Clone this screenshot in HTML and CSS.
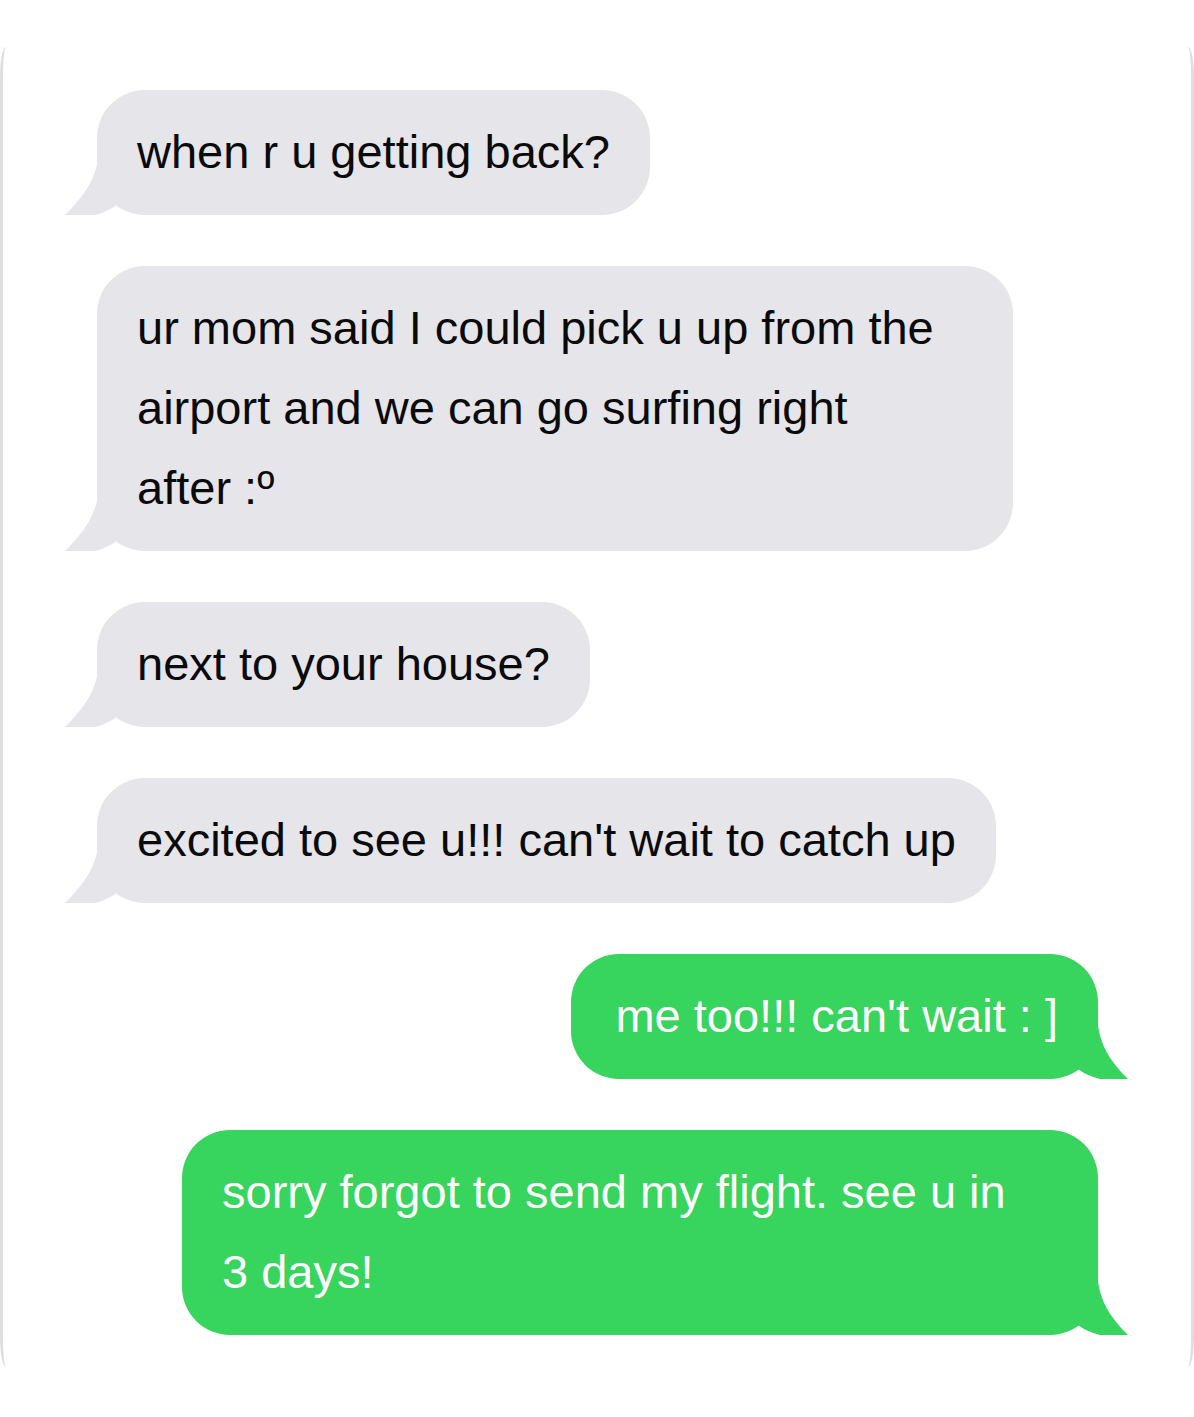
FILE: index.html
```html
<!DOCTYPE html>
<html lang="en">
<head>
<meta charset="utf-8">
<title>Messages</title>
<link rel="stylesheet" href="styles.css">
</head>
<body>
  <div class="frame">
    <div class="thread">
      <div class="bubble them">when r u getting back?</div>
      <div class="bubble them wide">ur mom said I could pick u up from the<br>airport and we can go surfing right<br>after :º</div>
      <div class="bubble them">next to your house?</div>
      <div class="bubble them">excited to see u!!! can't wait to catch up</div>
      <div class="bubble me">me too!!! can't wait : ]</div>
      <div class="bubble me wide">sorry forgot to send my flight. see u in<br>3 days!</div>
    </div>
  </div>
</body>
</html>
```

FILE: styles.css
```css
html, body {
  margin: 0;
  padding: 0;
  background: #ffffff;
}

body {
  font-family: "Liberation Sans", Arial, sans-serif;
}

.frame {
  margin-top: 47px;
  height: 1320px;
  box-sizing: border-box;
  border-left: 3px solid #dedede;
  border-right: 3px solid #dedede;
  border-radius: 6px / 30px;
  padding: 43px 93px 0 94px;
}

.thread {
  display: flex;
  flex-direction: column;
  align-items: flex-start;
  gap: 51px;
}

.bubble {
  position: relative;
  box-sizing: border-box;
  padding: 22px 40px 23px 40px;
  font-size: 47px;
  line-height: 80px;
  border-radius: 48px;
  white-space: nowrap;
}

.bubble.wide {
  width: 916px;
}

.bubble::before {
  content: "";
  position: absolute;
  bottom: 0;
  width: 60px;
}

.them {
  background: #e5e5ea;
  color: #0a0a0a;
}

.them::before {
  left: -32px;
  height: 50px;
  background: #e5e5ea;
  clip-path: path("M0 50 C14 36 27 21 32 0 L60 0 L60 30 Q52 44 30 50 Z");
}

.me {
  align-self: flex-end;
  background: #37d45e;
  color: #ffffff;
  padding-left: 44px;
}

.me.wide {
  padding-left: 40px;
}

.me::before {
  right: -30px;
  height: 54px;
  background: #37d45e;
  clip-path: path("M60 54 C46 40 33 24 30 0 L0 0 L0 32 Q8 48 32 54 Z");
}
```
